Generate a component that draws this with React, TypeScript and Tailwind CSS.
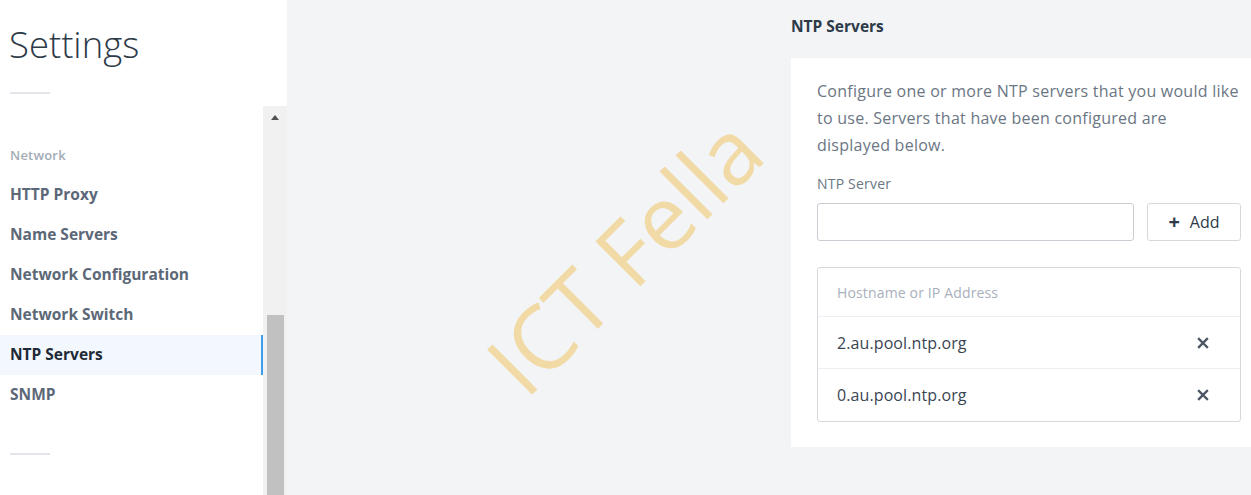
import React from 'react';

const navItems = ['HTTP Proxy', 'Name Servers', 'Network Configuration', 'Network Switch', 'NTP Servers', 'SNMP'];
const servers = ['2.au.pool.ntp.org', '0.au.pool.ntp.org'];

const CloseIcon = () => (
    <svg width="12" height="12" viewBox="0 0 12 12">
        <path d="M2 2 L10 10 M10 2 L2 10" stroke="#4b5563" strokeWidth="2.4" strokeLinecap="square" />
    </svg>
);

const App: React.FC = () => {
    return (
        <div className="relative flex h-[495px] w-[1251px] overflow-hidden bg-[#f2f4f6] font-['Open_Sans',sans-serif]">
            {/* Sidebar */}
            <aside className="flex w-[287px] shrink-0 flex-col bg-white">
                <h1 className="mt-[20px] pl-[9px] text-[36.5px] font-light leading-[48px] text-[#2d3a48]">Settings</h1>
                <div className="ml-[10px] mt-[24px] h-[2px] w-[40px] bg-[#e2e6eb]" />
                <div className="mt-[12px] flex flex-1 overflow-hidden">
                    <nav className="flex-1 pt-[41px]">
                        <div className="pl-[10px] text-[13px] font-semibold leading-[16px] tracking-[0.2px] text-[#a3abb6]">Network</div>
                        <ul className="mt-[12px]">
                            {navItems.map((item) => {
                                const active = item === 'NTP Servers';
                                return (
                                    <li
                                        key={item}
                                        className={`flex h-[40px] items-center pl-[10px] text-[15.5px] font-bold ${active ? 'border-r-2 border-[#3b9cf0] bg-[#f3f8fe] text-[#1f2a37]' : 'text-[#5c6877]'}`}
                                    >
                                        {item}
                                    </li>
                                );
                            })}
                        </ul>
                        <div className="ml-[10px] mt-[38px] h-[2px] w-[40px] bg-[#e2e6eb]" />
                    </nav>
                    {/* Scrollbar */}
                    <div className="flex w-[24px] shrink-0 flex-col items-center bg-[#f1f1f1]">
                        <div className="mt-[9px] h-0 w-0 border-x-[4px] border-b-[5px] border-x-transparent border-b-[#505050]" />
                        <div className="mt-[195px] h-[200px] w-[17px] bg-[#c1c1c1]" />
                    </div>
                </div>
            </aside>

            {/* Main */}
            <main className="flex flex-1 justify-end">
                <div className="flex w-[460px] flex-col">
                    <h2 className="mt-[15px] text-[15.5px] font-bold leading-[22px] text-[#2d3a48]">NTP Servers</h2>
                    <section className="mt-[21px] bg-white pb-[25px] pl-[26px] pr-[10px] pt-[20px]">
                        <p className="whitespace-nowrap text-[16px] leading-[27px] tracking-[0.25px] text-[#6b7684]">
                            Configure one or more NTP servers that you would like
                            <br />
                            to use. Servers that have been configured are
                            <br />
                            displayed below.
                        </p>
                        <label className="mt-[17px] block text-[14px] leading-[16px] tracking-[0.2px] text-[#6b7684]">NTP Server</label>
                        <div className="mt-[11px] flex gap-[13px]">
                            <input className="h-[38px] w-[317px] rounded-[3px] border border-[#c9ced4] bg-white" />
                            <button className="flex h-[38px] flex-1 items-center justify-center gap-[10px] rounded-[3px] border border-[#d5d9de] bg-white text-[16px] text-[#2d3a48]">
                                <span className="text-[20px] font-bold leading-none">+</span>
                                <span>Add</span>
                            </button>
                        </div>
                        <div className="mt-[26px] rounded-[3px] border border-[#d5d9de]">
                            <div className="flex h-[49px] items-center border-b border-[#eceff2] px-[19px] text-[14px] tracking-[0.15px] text-[#a8b0bb]">
                                Hostname or IP Address
                            </div>
                            {servers.map((s, i) => (
                                <div
                                    key={s}
                                    className={`flex h-[52px] items-center justify-between pl-[19px] pr-[31px] text-[16px] tracking-[0.1px] text-[#3a4552] ${i === 0 ? 'border-b border-[#eceff2]' : ''}`}
                                >
                                    <span>{s}</span>
                                    <CloseIcon />
                                </div>
                            ))}
                        </div>
                    </section>
                </div>
            </main>

            {/* Watermark */}
            <div className="pointer-events-none absolute left-[623px] top-[255px] -translate-x-1/2 -translate-y-1/2 -rotate-45 whitespace-nowrap text-[89px] leading-none text-[#f3d89f] opacity-90">
                ICT Fella
            </div>
        </div>
    );
};

export default App;
